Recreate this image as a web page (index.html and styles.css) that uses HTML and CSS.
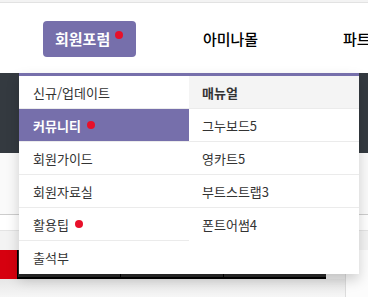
FILE: index.html
```html
<!DOCTYPE html>
<html lang="ko">
<head>
    <meta charset="UTF-8">
    <meta name="viewport" content="width=device-width, initial-scale=1.0">
    <title>회원포럼</title>
    <link rel="stylesheet" href="styles.css">
</head>
<body>
    <div class="top-line"></div>

    <!-- Main navigation -->
    <header class="header">
        <nav class="gnb">
            <div class="gnb-item on">
                <a class="gnb-link" href="#">회원포럼<span class="dot"></span></a>

                <div class="mega">
                    <ul class="mega-col">
                        <li class="mega-item">신규/업데이트</li>
                        <li class="mega-item active">커뮤니티<span class="dot"></span></li>
                        <li class="mega-item">회원가이드</li>
                        <li class="mega-item">회원자료실</li>
                        <li class="mega-item">활용팁<span class="dot"></span></li>
                        <li class="mega-item">출석부</li>
                    </ul>
                    <ul class="mega-col right">
                        <li class="mega-item head">매뉴얼</li>
                        <li class="mega-item">그누보드5</li>
                        <li class="mega-item">영카트5</li>
                        <li class="mega-item">부트스트랩3</li>
                        <li class="mega-item">폰트어썸4</li>
                    </ul>
                </div>
            </div>
            <div class="gnb-item"><a class="gnb-link" href="#">아미나몰</a></div>
            <div class="gnb-item last"><a class="gnb-link" href="#">파트</a></div>
        </nav>
    </header>

    <div class="sub-bar"></div>

    <!-- Page content behind the menu -->
    <div class="content">
        <div class="strip strip1"></div>
        <div class="strip strip2"></div>
        <div class="strip strip3"></div>
        <div class="lower">
            <div class="lower-main">
                <div class="tab-row">
                    <div class="red-box"></div>
                    <div class="tabs">
                        <div class="tab"></div>
                        <div class="tab"></div>
                        <div class="tab"></div>
                    </div>
                </div>
                <div class="lower-fill"></div>
            </div>
            <div class="lower-side"></div>
        </div>
    </div>
</body>
</html>
```

FILE: styles.css
```css
body {
    margin: 0;
    width: 368px;
    height: 297px;
    overflow: hidden;
    font-family: "Noto Sans CJK KR", "Noto Sans", sans-serif;
    background-color: #f2f2f2;
    color: #333;
}

ul {
    margin: 0;
    padding: 0;
    list-style: none;
}

a {
    text-decoration: none;
}

.top-line {
    height: 2px;
    background-color: #f3f3f3;
    border-bottom: 1px solid #e2e2e2;
}

.header {
    height: 70px;
    background-color: #fff;
}

.gnb {
    display: flex;
    padding-left: 19px;
    height: 100%;
}

.gnb-item {
    position: relative;
    flex: 0 0 141px;
    display: flex;
    justify-content: center;
    align-items: flex-start;
    padding-top: 18px;
    box-sizing: border-box;
}

.gnb-item.last {
    flex-basis: 48px;
    justify-content: flex-start;
    padding-left: 42px;
    box-sizing: content-box;
}

.gnb-link {
    display: flex;
    align-items: center;
    height: 36px;
    font-size: 15px;
    font-weight: 500;
    line-height: 36px;
    color: #000;
    white-space: nowrap;
}

.gnb-item.on .gnb-link {
    width: 93px;
    box-sizing: border-box;
    padding-left: 12px;
    border-radius: 4px;
    background-color: #766fab;
    color: #fff;
    font-weight: bold;
}

.dot {
    display: inline-block;
    width: 8px;
    height: 8px;
    border-radius: 50%;
    background-color: #e8102a;
}

.gnb-link .dot {
    align-self: flex-start;
    margin-top: 10px;
    margin-left: 5px;
}

/* Mega dropdown */
.mega {
    position: absolute;
    top: 100%;
    left: 0;
    z-index: 10;
    width: 340px;
    display: grid;
    grid-template-columns: 170px 170px;
    align-items: start;
    padding-bottom: 1px;
    background-color: #fff;
    border-top: 3px solid #766fab;
    box-shadow: 0 6px 12px rgba(0, 0, 0, 0.18);
}

.mega-item {
    display: flex;
    align-items: center;
    height: 32px;
    padding: 0 14px;
    font-size: 13px;
    color: #333;
    border-bottom: 1px solid #ebebeb;
}

.mega-item:last-child {
    border-bottom: none;
}

.mega-col.right .mega-item {
    padding-left: 13px;
}

.mega-item.active {
    background-color: #766fab;
    color: #fff;
    font-weight: bold;
}

.mega-item.head {
    background-color: #f4f4f4;
    font-weight: bold;
}

.mega-item .dot {
    margin-left: 6px;
}

/* Dark sub bar */
.sub-bar {
    height: 80px;
    background-color: #343a40;
}

/* Content under the menu */
.strip1 {
    height: 61px;
    background-color: #fafafa;
    border-bottom: 1px solid #cdcdcd;
}

.strip2 {
    height: 15px;
    background-color: #fff;
    border-bottom: 1px solid #e4e4e4;
}

.strip3 {
    height: 19px;
    background-color: #f3f3f3;
}

.lower {
    display: flex;
}

.lower-main {
    flex: 1;
}

.tab-row {
    display: flex;
    height: 29px;
    background-color: #eee;
}

.red-box {
    width: 17px;
    background-color: #d6000f;
}

.tabs {
    display: flex;
    width: 309px;
}

.tab {
    flex: 1;
    background-color: #2b2b2b;
    border-left: 1px solid #000;
    border-bottom: 2px solid #000;
}

.lower-fill {
    height: 18px;
    background: linear-gradient(#e6e6e6, #f6f6f6);
}

.lower-side {
    width: 22px;
    background-color: #fcfcfc;
    border-left: 1px solid #dcdcdc;
}
```
